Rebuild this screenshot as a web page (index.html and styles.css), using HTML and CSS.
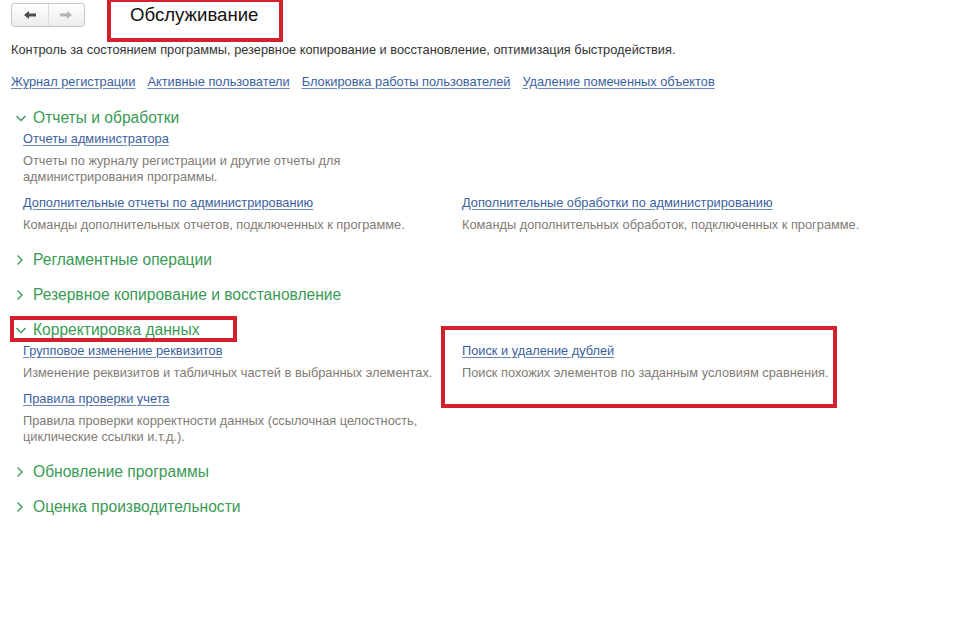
FILE: index.html
```html
<!DOCTYPE html>
<html lang="ru">
<head>
<meta charset="utf-8">
<title>Обслуживание</title>
<link rel="stylesheet" href="styles.css">
</head>
<body>
<div class="page">
  <div class="top">
    <div class="nav">
      <span class="nav-btn">
        <svg width="14" height="10" viewBox="0 0 14 10"><path d="M1 5 L6 1 L6 3.5 L13 3.5 L13 6.5 L6 6.5 L6 9 Z" fill="#4a4a4a"/></svg>
      </span>
      <span class="nav-btn">
        <svg width="14" height="10" viewBox="0 0 14 10"><path d="M13 5 L8 1 L8 3.5 L1 3.5 L1 6.5 L8 6.5 L8 9 Z" fill="#b4b4b4"/></svg>
      </span>
    </div>
    <h1 class="title">Обслуживание</h1>
  </div>
  <p class="intro">Контроль за состоянием программы, резервное копирование и восстановление, оптимизация быстродействия.</p>
  <div class="toplinks">
    <a class="link">Журнал регистрации</a>
    <a class="link">Активные пользователи</a>
    <a class="link">Блокировка работы пользователей</a>
    <a class="link">Удаление помеченных объектов</a>
  </div>

  <section class="group open">
    <div class="group-head"><svg class="chev" width="12" height="12" viewBox="0 0 12 12"><path d="M1.5 4 L6 8.5 L10.5 4" fill="none" stroke="#3a9a55" stroke-width="1.4"/></svg><span>Отчеты и обработки</span></div>
    <div class="items">
      <div class="item c1">
        <a class="link">Отчеты администратора</a>
        <p class="desc">Отчеты по журналу регистрации и другие отчеты для администрирования программы.</p>
      </div>
      <div class="item c1">
        <a class="link">Дополнительные отчеты по администрированию</a>
        <p class="desc">Команды дополнительных отчетов, подключенных к программе.</p>
      </div>
      <div class="item c2 r2">
        <a class="link">Дополнительные обработки по администрированию</a>
        <p class="desc">Команды дополнительных обработок, подключенных к программе.</p>
      </div>
    </div>
  </section>

  <section class="group">
    <div class="group-head"><svg class="chev" width="12" height="12" viewBox="0 0 12 12"><path d="M2.5 1.5 L7 6 L2.5 10.5" fill="none" stroke="#3a9a55" stroke-width="1.4"/></svg><span>Регламентные операции</span></div>
  </section>

  <section class="group">
    <div class="group-head"><svg class="chev" width="12" height="12" viewBox="0 0 12 12"><path d="M2.5 1.5 L7 6 L2.5 10.5" fill="none" stroke="#3a9a55" stroke-width="1.4"/></svg><span>Резервное копирование и восстановление</span></div>
  </section>

  <section class="group open">
    <div class="group-head"><svg class="chev" width="12" height="12" viewBox="0 0 12 12"><path d="M1.5 4 L6 8.5 L10.5 4" fill="none" stroke="#3a9a55" stroke-width="1.4"/></svg><span>Корректировка данных</span></div>
    <div class="items">
      <div class="item c1">
        <a class="link">Групповое изменение реквизитов</a>
        <p class="desc">Изменение реквизитов и табличных частей в выбранных элементах.</p>
      </div>
      <div class="item c2 r1">
        <a class="link">Поиск и удаление дублей</a>
        <p class="desc">Поиск похожих элементов по заданным условиям сравнения.</p>
      </div>
      <div class="item c1">
        <a class="link">Правила проверки учета</a>
        <p class="desc">Правила проверки корректности данных (ссылочная целостность, циклические ссылки и.т.д.).</p>
      </div>
    </div>
  </section>

  <section class="group">
    <div class="group-head"><svg class="chev" width="12" height="12" viewBox="0 0 12 12"><path d="M2.5 1.5 L7 6 L2.5 10.5" fill="none" stroke="#3a9a55" stroke-width="1.4"/></svg><span>Обновление программы</span></div>
  </section>

  <section class="group">
    <div class="group-head"><svg class="chev" width="12" height="12" viewBox="0 0 12 12"><path d="M2.5 1.5 L7 6 L2.5 10.5" fill="none" stroke="#3a9a55" stroke-width="1.4"/></svg><span>Оценка производительности</span></div>
  </section>

  <div class="mark mark-title"></div>
  <div class="mark mark-group"></div>
  <div class="mark mark-item"></div>
</div>
</body>
</html>
```

FILE: styles.css
```css
* { box-sizing: border-box; }
html, body { margin: 0; padding: 0; background: #fff; }
body {
  font-family: "Liberation Sans", Arial, sans-serif;
  font-size: 12.8px;
  color: #333;
}
.page {
  position: relative;
  width: 953px;
  height: 638px;
  padding: 3px 0 0 11px;
}
.top {
  display: flex;
  align-items: center;
  height: 24px;
}
.nav {
  display: flex;
  width: 74px;
  height: 24px;
  border: 1px solid #c6c6c6;
  border-radius: 3px;
  background: linear-gradient(#ffffff, #ececec);
}
.nav-btn {
  flex: 1;
  display: flex;
  align-items: center;
  justify-content: center;
}
.nav-btn + .nav-btn { border-left: 1px solid #dcdcdc; }
.title {
  margin: 0 0 0 45px;
  font-size: 18.6px;
  font-weight: normal;
  color: #111;
  line-height: 24px;
}
.intro {
  margin: 15px 0 0;
  line-height: 16px;
  color: #333;
}
.toplinks {
  display: flex;
  gap: 12px;
  margin-top: 16px;
  line-height: 16px;
}
.link {
  color: #3b5f9e;
  text-decoration: underline;
  text-decoration-color: #6a86b8;
  text-underline-offset: 2px;
  line-height: 16px;
  cursor: pointer;
}
.group { margin-top: 15px; }
.group.open + .group { margin-top: 16px; }
.toplinks + .group { margin-top: 17px; }
.group-head {
  display: flex;
  align-items: center;
  gap: 6px;
  height: 20px;
  padding: 2px 0 0 4px;
  font-size: 15.6px;
  color: #3a9a55;
}
.chev { flex: none; }
.items {
  display: grid;
  grid-template-columns: 420px 420px;
  column-gap: 19px;
  row-gap: 10px;
  padding: 4px 0 0 12px;
  grid-auto-flow: row dense;
}
.item { display: flex; flex-direction: column; align-items: flex-start; }
.c1 { grid-column: 1; }
.c2 { grid-column: 2; }
.r1 { grid-row: 1; }
.r2 { grid-row: 2; }
.desc {
  margin: 6px 0 0;
  line-height: 16px;
  color: #7f7b74;
}
.mark {
  position: absolute;
  border: 4px solid #d4202c;
}
.mark-title { left: 107px; top: 0; width: 176px; height: 42px; border-top-width: 2px; }
.mark-group { left: 10px; top: 316px; width: 227px; height: 26px; }
.mark-item { left: 441px; top: 326px; width: 396px; height: 82px; }
```
